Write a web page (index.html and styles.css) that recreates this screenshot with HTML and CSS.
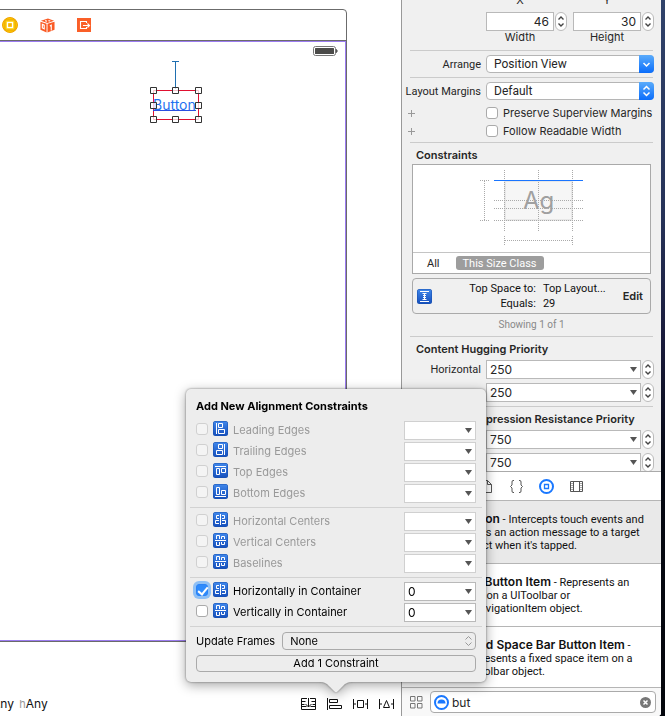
FILE: index.html
```html
<!DOCTYPE html>
<html lang="en">
<head>
<meta charset="utf-8">
<title>Interface Builder</title>
<link rel="stylesheet" href="styles.css">
</head>
<body>
<svg class="defs" aria-hidden="true">
  <defs>
    <linearGradient id="blue" x1="0" y1="0" x2="0" y2="1"><stop offset="0" stop-color="#3f86ea"/><stop offset="1" stop-color="#1650bd"/></linearGradient>
    <symbol id="tile" viewBox="0 0 15 15"><rect width="15" height="15" rx="2.5" fill="#164fae"/><rect x=".5" y=".5" width="14" height="14" rx="2" fill="url(#blue)"/></symbol>
    <symbol id="leading" viewBox="0 0 15 15"><use href="#tile"/><path class="w" d="M3.500 2v11M5.500 2.500h4v4h-4zM5.500 8.500h6v4h-6z"/></symbol>
    <symbol id="trailing" viewBox="0 0 15 15"><use href="#tile"/><path class="w" d="M11.500 2v11M5.500 2.500h4v4h-4zM3.500 8.500h6v4h-6z"/></symbol>
    <symbol id="top" viewBox="0 0 15 15"><use href="#tile"/><path class="w" d="M2 3.500h11M3.500 5.500h3v6h-3zM8.500 5.500h4v4h-4z"/></symbol>
    <symbol id="bottom" viewBox="0 0 15 15"><use href="#tile"/><path class="w" d="M2 12.500h11M3.500 3.500h3v7h-3zM8.500 6.500h4v4h-4z"/></symbol>
    <symbol id="hcenter" viewBox="0 0 15 15"><use href="#tile"/><path class="w" d="M7.500 2v11M6 3.500H3.500v3H6M6 8.500H2.500v3H6M9 3.500h2.500v3H9M9 8.500h3.500v3H9"/></symbol>
    <symbol id="vcenter" viewBox="0 0 15 15"><use href="#tile"/><path class="w" d="M2 7.500h11M3.500 6V2.500h3V6M8.500 6V3.500h3V6M3.500 9v3.500h3V9M8.500 9v2.500h3V9"/></symbol>
    <symbol id="down" viewBox="0 0 7 5"><path d="M0 0h7L3.500 5z" fill="#555"/></symbol>
    <symbol id="step" viewBox="0 0 12 19"><path d="M3.500 7.500L6 5l2.500 2.500M3.500 11.500L6 14l2.500-2.500" fill="none" stroke="#444" stroke-width="1.400"/></symbol>
  </defs>
</svg>

<main class="window">
  <section class="canvas">
    <div class="device">
      <div class="dock">
        <svg width="16" height="16" viewBox="0 0 16 16"><circle cx="8" cy="8" r="7.500" fill="#fdc500" stroke="#f0a400"/><rect x="3" y="3" width="10" height="10" fill="#ffd51c" stroke="#e9a400"/><rect x="5.500" y="5.500" width="5" height="5" fill="#f6b500" stroke="#fff" stroke-width="1.300"/></svg>
        <svg width="15" height="15" viewBox="0 0 16 16"><path fill="#fa5b25" d="M8.500.5L15 3 8 5.200 1 3zM.5 4l6.500 2.200V15.500L.5 12.500zM15.500 4L8 6.200V15.500l7.500-3z"/><path d="M2.500 6.800l2 .8v4l-2-1zM10.500 8.500l1.500-.8v5.500M5.500 2.800l2 .6M9 2.800l2 .4" fill="none" stroke="#fff" stroke-width="1.200"/></svg>
        <svg width="14" height="14" viewBox="0 0 14 14"><rect width="14" height="14" fill="#fa5f28"/><path d="M9.500 5V3.500h-6v7h6V9M6 7.500h6M10.500 5.500l2 2-2 2" fill="none" stroke="#fff" stroke-width="1.100"/></svg>
      </div>
      <div class="screen">
        <svg class="battery" width="25" height="10" viewBox="0 0 25 10"><rect x=".5" y=".5" width="22" height="9" rx="2" fill="#fff" stroke="#777"/><rect x="2" y="2" width="19" height="6" rx=".5" fill="#4b4b49"/><path d="M23.500 3.500q1.500 1.500 0 3z" fill="#555" stroke="#555"/></svg>
        <div class="node">
          <svg class="selection" width="52" height="60" viewBox="0 0 52 60" fill="none">
            <path d="M22 .5h7M25.500 .5V28" stroke="#1f6fb0"/>
            <path d="M3.500 29.500h45v29h-45z" stroke="#e01030"/>
          </svg>
          <span class="node-text">Button</span>
          <svg class="selection" width="52" height="64" viewBox="0 0 52 64" fill="#fff" fill-opacity=".75" stroke="#333">
            <path d="M.5 26.500h6v6h-6zM22.500 26.500h6v6h-6zM45.500 26.500h6v6h-6zM.5 41.500h6v6h-6zM45.500 41.500h6v6h-6zM.5 55.500h6v6h-6zM22.500 55.500h6v6h-6zM45.500 55.500h6v6h-6z"/>
          </svg>
        </div>
      </div>
    </div>
    <footer class="canvas-bar">
      <p class="size-class">Any <small>h</small>Any</p>
      <div class="tools">
        <button aria-label="Stack"><svg width="15" height="12" viewBox="0 0 15 12"><path d="M6 .5H.5v11h14V.5H9M.5 3.500h4M10.500 3.500h4M.5 6.500h3M11.500 6.500h3M.5 8.500h5M9.500 8.500h5M7.500 0v9M4.500 6l3 3 3-3"/></svg></button>
        <button aria-label="Align"><svg width="15" height="12" viewBox="0 0 15 12"><path d="M.5 0v12M2.500 1.500h8v3h-8zM2.500 7.500h12v3h-12z"/></svg></button>
        <button aria-label="Pin"><svg width="15" height="12" viewBox="0 0 15 12"><path d="M.5 1v10M14.500 1v10M.5 6H3M12 6h2.500M4.500 2.500h6v7h-6z"/></svg></button>
        <button aria-label="Resolve"><svg width="15" height="12" viewBox="0 0 15 12"><path d="M.5 1v10M14.500 1v10M.5 6H3M12 6h2.500M7.500 2.500l3 7h-6z"/></svg></button>
      </div>
    </footer>
  </section>

  <aside class="side">
    <section class="inspector">
      <div class="row xy"><div class="pair"><span>X</span><span>Y</span></div></div>
      <div class="row">
        <div class="sizes">
          <input id="w" class="num" value="46"><button class="stepper" aria-label="Width step"><svg><use href="#step"/></svg></button>
          <input id="h" class="num second" value="30"><button class="stepper" aria-label="Height step"><svg><use href="#step"/></svg></button>
        </div>
      </div>
      <div class="row"><div class="pair"><label for="w">Width</label><label for="h">Height</label></div></div>
      <hr class="after-sizes">
      <div class="row"><label for="arrange">Arrange</label>
        <div class="popup"><select id="arrange"><option>Position View</option></select><svg class="cap" viewBox="0 0 14 18"><path d="M4 8l3 3 3-3"/></svg></div></div>
      <hr>
      <div class="row"><label for="margins">Layout Margins</label>
        <div class="popup"><select id="margins"><option>Default</option></select><svg class="cap" viewBox="0 0 14 18"><path d="M4 7.500l3-3 3 3M4 10.500l3 3 3-3"/></svg></div></div>
      <div class="checks">
        <div class="row"><button class="plus" aria-label="Add variation"><svg width="7" height="7"><path d="M3.500 0v7M0 3.500h7"/></svg></button><label class="check"><input type="checkbox">Preserve Superview Margins</label></div>
        <div class="row"><button class="plus" aria-label="Add variation"><svg width="7" height="7"><path d="M3.500 0v7M0 3.500h7"/></svg></button><label class="check"><input type="checkbox">Follow Readable Width</label></div>
      </div>
      <hr class="tight">
      <h2 class="first">Constraints</h2>
      <div class="diagram">
        <svg width="237" height="87" viewBox="0 0 237 87">
          <rect x="92" y="16" width="67" height="39" fill="#f6f6f6" stroke="#e8e8e8" stroke-width="2"/>
          <text x="110" y="44" class="ag">Ag</text>
          <path class="dots" d="M91.500 5v61M125.500 5v61M159.500 5v61M81 35.500h89M81 43.500h89M81 55.500h89M67 15.500h9M67 55.500h9M71.500 16v39M91.500 71v9M159.500 71v9M92 75.500h67"/>
          <path d="M81 15.500h89" stroke="#1a75ff"/>
        </svg>
        <div class="scope"><button>All</button><button class="on">This Size Class</button></div>
      </div>
      <div class="detail">
        <svg width="15" height="15" viewBox="0 0 15 15"><use href="#tile"/><path class="w" d="M3 2.500h9M3 12.500h9M5.500 4.500h4M5.500 10.500h4M7.500 4.500v6M6 6.500h3M6 8.500h3"/></svg>
        <dl><dt>Top Space to:</dt><dd>Top Layout...</dd><dt>Equals:</dt><dd>29</dd></dl>
        <button>Edit</button>
      </div>
      <p class="showing">Showing 1 of 1</p>
      <hr>
      <h2>Content Hugging Priority</h2>
      <div class="row gap"><label for="hh">Horizontal</label><div class="combo-step"><div class="combo"><input id="hh" value="250"><button aria-label="Choices"><svg><use href="#down"/></svg></button></div><button class="stepper" aria-label="Step"><svg><use href="#step"/></svg></button></div></div>
      <div class="row gap"><div class="combo-step"><div class="combo"><input aria-label="Vertical" value="250"><button aria-label="Choices"><svg><use href="#down"/></svg></button></div><button class="stepper" aria-label="Step"><svg><use href="#step"/></svg></button></div></div>
      <hr class="flush">
      <h2>Content Compression Resistance Priority</h2>
      <div class="row gap"><div class="combo-step"><div class="combo"><input aria-label="Horizontal" value="750"><button aria-label="Choices"><svg><use href="#down"/></svg></button></div><button class="stepper" aria-label="Step"><svg><use href="#step"/></svg></button></div></div>
      <div class="row gap"><div class="combo-step"><div class="combo"><input aria-label="Vertical" value="750"><button aria-label="Choices"><svg><use href="#down"/></svg></button></div><button class="stepper" aria-label="Step"><svg><use href="#step"/></svg></button></div></div>
    </section>

    <section class="library">
      <nav class="tabs">
        <button aria-label="Files"><svg width="15" height="15" viewBox="0 0 15 15"><path d="M2.500 1.500h6l4 4v8h-10zM8.500 1.500v4h4"/></svg></button>
        <button aria-label="Snippets"><svg width="15" height="15" viewBox="0 0 15 15"><path d="M5 1.500H4Q3 1.500 3 3v3L1.500 7.500 3 9v3q0 1.500 1 1.500h1M10 1.500h1q1 0 1 1.500v3l1.500 1.500L12 9v3q0 1.500-1 1.500h-1"/></svg></button>
        <button aria-label="Objects"><svg width="15" height="15" viewBox="0 0 15 15"><g stroke="#1a78ff"><circle cx="7.500" cy="7.500" r="6.500" stroke-width="2"/><path d="M5.500 5.500h4v4h-4z" stroke-width="1.300"/></g></svg></button>
        <button aria-label="Media"><svg width="15" height="15" viewBox="0 0 15 15"><path d="M1.500 2.500h12v10h-12zM4.500 2.500v10M10.500 2.500v10"/><path d="M3 4v8M12 4v8" stroke-dasharray="1 1"/></svg></button>
      </nav>
      <ul class="items">
        <li class="selected"><p><b>Button</b> - Intercepts touch events and<br>sends an action message to a target<br>object when it's tapped.</p></li>
        <li><p><b>Bar Button Item</b> - Represents an<br>item on a UIToolbar or<br>UINavigationItem object.</p></li>
        <li><p><b>Fixed Space Bar Button Item</b> -<br>Represents a fixed space item on a<br>UIToolbar object.</p></li>
      </ul>
      <div class="filter">
        <button aria-label="Icon view"><svg width="13" height="13" viewBox="0 0 13 13"><path d="M.5 .5h4.500v4.500h-4.500zM7.500 .5h4.500v4.500h-4.500zM.5 7.500h4.500v4.500h-4.500zM7.500 7.500h4.500v4.500h-4.500z" fill="none" stroke="#777"/></svg></button>
        <div class="search">
          <svg width="15" height="15" viewBox="0 0 15 15"><circle cx="7.500" cy="7.500" r="6.500" fill="#fff" stroke="#1a78ff" stroke-width="2"/><path d="M3.500 8.500a4 4 0 0 1 8 0z" fill="#1a78ff"/></svg>
          <input aria-label="Filter" value="but">
          <button aria-label="Clear"><svg width="11" height="11" viewBox="0 0 11 11"><circle cx="5.500" cy="5.500" r="5.500" fill="#777"/><path d="M3.500 3.500l4 4M7.500 3.500l-4 4" stroke="#fff" stroke-width="1.500"/></svg></button>
        </div>
      </div>
    </section>
  </aside>

  <form class="popover">
    <h2>Add New Alignment Constraints</h2>
    <fieldset>
      <div class="line off"><input type="checkbox" id="a1" disabled><svg><use href="#leading"/></svg><label for="a1">Leading Edges</label><div class="combo"><input aria-label="Leading value" disabled><button type="button" aria-label="Choices"><svg><use href="#down"/></svg></button></div></div>
      <div class="line off"><input type="checkbox" id="a2" disabled><svg><use href="#trailing"/></svg><label for="a2">Trailing Edges</label><div class="combo"><input aria-label="Trailing value" disabled><button type="button" aria-label="Choices"><svg><use href="#down"/></svg></button></div></div>
      <div class="line off"><input type="checkbox" id="a3" disabled><svg><use href="#top"/></svg><label for="a3">Top Edges</label><div class="combo"><input aria-label="Top value" disabled><button type="button" aria-label="Choices"><svg><use href="#down"/></svg></button></div></div>
      <div class="line off"><input type="checkbox" id="a4" disabled><svg><use href="#bottom"/></svg><label for="a4">Bottom Edges</label><div class="combo"><input aria-label="Bottom value" disabled><button type="button" aria-label="Choices"><svg><use href="#down"/></svg></button></div></div>
    </fieldset>
    <fieldset>
      <div class="line off"><input type="checkbox" id="a5" disabled><svg><use href="#hcenter"/></svg><label for="a5">Horizontal Centers</label><div class="combo"><input aria-label="Horizontal centers value" disabled><button type="button" aria-label="Choices"><svg><use href="#down"/></svg></button></div></div>
      <div class="line off"><input type="checkbox" id="a6" disabled><svg><use href="#vcenter"/></svg><label for="a6">Vertical Centers</label><div class="combo"><input aria-label="Vertical centers value" disabled><button type="button" aria-label="Choices"><svg><use href="#down"/></svg></button></div></div>
      <div class="line off"><input type="checkbox" id="a7" disabled><svg><use href="#vcenter"/></svg><label for="a7">Baselines</label><div class="combo"><input aria-label="Baselines value" disabled><button type="button" aria-label="Choices"><svg><use href="#down"/></svg></button></div></div>
    </fieldset>
    <fieldset>
      <div class="line"><input type="checkbox" id="a8" checked><svg><use href="#hcenter"/></svg><label for="a8">Horizontally in Container</label><div class="combo"><input aria-label="Horizontal offset" value="0"><button type="button" aria-label="Choices"><svg><use href="#down"/></svg></button></div></div>
      <div class="line"><input type="checkbox" id="a9"><svg><use href="#vcenter"/></svg><label for="a9">Vertically in Container</label><div class="combo"><input aria-label="Vertical offset" value="0"><button type="button" aria-label="Choices"><svg><use href="#down"/></svg></button></div></div>
    </fieldset>
    <div class="update"><label for="uf">Update Frames</label><div class="popup plain"><select id="uf"><option>None</option></select><svg class="cap" viewBox="0 0 14 18"><path d="M4 7.500l3-3 3 3M4 10.500l3 3 3-3"/></svg></div></div>
    <button type="button" class="add">Add 1 Constraint</button>
    <svg class="arrow" width="36" height="12" viewBox="0 0 36 12"><path d="M0 0v1C8 1 9 3 12 6l4.500 4.500Q18 12 19.500 10.500L24 6C27 3 28 1 36 1V0z" fill="#ededed"/></svg>
  </form>
</main>
</body>
</html>
```

FILE: styles.css
```css
* { box-sizing: border-box; }
body {
  margin: 0;
  font: 11px/13px Inter, "Liberation Sans", sans-serif;
  color: #262626;
  background: linear-gradient(#30426a, #263258 30%, #191a3a 48%, #050812 65%, #04060c);
}
h2, p, dl, dd, ul, fieldset { margin: 0; padding: 0; border: 0; }
ul { list-style: none; }
svg { display: block; flex: none; }
input, select, button { font: inherit; color: inherit; margin: 0; padding: 0; border: 0; background: none; border-radius: 0; outline: 0; }
input { min-width: 0; }
select { appearance: none; }
button { display: flex; align-items: center; justify-content: center; }
.defs { position: absolute; width: 0; height: 0; }
.w { fill: none; stroke: #fff; }

.window {
  position: relative;
  display: flex;
  height: 100vh;
  margin-right: 4px;
  background: #fff;
  overflow: hidden;
  border-bottom-right-radius: 4px;
}

/* Canvas */
.canvas { flex: 1; min-width: 0; display: flex; flex-direction: column; overflow: hidden; }
.device {
  flex: 1;
  display: flex;
  flex-direction: column;
  margin: 9px 54px 0 -10px;
  border: 1px solid #6b6b6b;
  border-top-right-radius: 4px;
}
.dock { display: flex; align-items: center; gap: 22px; height: 30px; padding-left: 11px; }
.screen { position: relative; flex: 1; border: 1px solid #9b7cf0; box-shadow: 0 -1px #6b6b6b; margin-top: 1px; }
.battery { margin: 4px 7px 0 auto; }
.node { position: absolute; left: 158px; top: 19px; width: 52px; height: 64px; }
.node .selection { position: absolute; left: 0; top: 0; }
.node-text { position: absolute; left: 3px; top: 35px; font-size: 14px; line-height: 18px; color: #1f72f0; border-bottom: 1px solid #2b4fe0; height: 15px; }
.canvas-bar { display: flex; justify-content: space-between; align-items: center; height: 74px; padding: 49px 7px 0 0; }
.size-class { margin-left: -8px; font-size: 12px; line-height: 14px; color: #111; white-space: nowrap; }
.size-class small { margin-left: 2px; font-size: 11px; color: #999; }
.tools { display: flex; gap: 11px; }
.tools path { fill: none; stroke: #111; }

/* Inspector */
.side { display: flex; flex-direction: column; width: 260px; border-left: 1px solid #999; background: #f0f0f0; }
.inspector { flex: 1; min-height: 0; overflow: hidden; }
.row { display: grid; grid-template-columns: 79px minmax(0, 1fr); column-gap: 5px; align-items: center; padding-right: 7px; }
.row > label:first-child { text-align: right; white-space: nowrap; }
.row > label:first-child, .popup select, .scope, .detail dl, .showing, .items { font-family: Roboto, Inter, sans-serif; }
.row > :only-child { grid-column: 2; }
.xy { margin-top: -6px; padding-bottom: 5px; }
.pair { display: grid; grid-template-columns: 68px 68px; column-gap: 19px; text-align: center; }
.sizes { display: flex; gap: 1px; }
.num { flex: 1; width: 0; height: 19px; padding: 0 4px; border: 1px solid #b9b9b9; background: #fff; text-align: right; font-size: 12px; }
.second { margin-left: 5px; }
.stepper { width: 12px; height: 19px; border: 1px solid #bbb; border-radius: 6px; background: #fff; flex: none; }
.stepper svg { width: 12px; height: 19px; }
hr { height: 1px; margin: 4px 8px; border: 0; background: #cbcbcb; }
.after-sizes { margin-top: 6px; }
.tight { margin-top: 2px; }
.flush { margin-top: 0; }
.popup { position: relative; height: 18px; }
.popup select { width: 100%; height: 18px; padding: 0 7px; border: 1px solid #b5b5b5; border-radius: 4px; background: #fff; font-size: 12px; line-height: 16px; }
.cap { position: absolute; right: 0; top: 0; width: 15px; height: 18px; border-radius: 0 4px 4px 0; background: linear-gradient(#5aabfb, #0a6dfb); pointer-events: none; }
.cap path { fill: none; stroke: #fff; stroke-width: 1.500; }
.checks { margin-top: 4px; }
.checks .row { height: 18px; }
.plus { margin-left: 6px; justify-self: start; }
.plus path { stroke: #999; }
.check { display: flex; align-items: center; gap: 5px; white-space: nowrap; }
input[type="checkbox"] { appearance: none; position: relative; flex: none; width: 12px; height: 12px; border: 1px solid #aaa; border-radius: 3px; background: #fff; }
input[type="checkbox"]:checked { border-color: #2a83f7; background: #2f8bfb; box-shadow: 0 0 0 3px #8fc0f5; }
input[type="checkbox"]:checked::after { content: ""; position: absolute; left: 3px; top: 0; width: 4px; height: 8px; border: solid #fff; border-width: 0 2px 2px 0; transform: rotate(40deg); }
h2 { font-size: 11px; line-height: 14px; font-weight: 600; white-space: nowrap; }
.inspector h2 { margin: 5px 14px 4px; }
.inspector h2.first { margin-bottom: 2px; }
.diagram { margin: 0 10px; border: 1px solid #a9a9a9; background: #fff; }
.diagram svg { margin: 0 auto; }
.ag { font-size: 24px; fill: #a0a0a0; }
.dots { fill: none; stroke: #aaa; stroke-dasharray: 1 1; }
.scope { display: flex; align-items: center; gap: 16px; height: 21px; padding-left: 14px; border-top: 1px solid #c4c4c4; }
.scope .on { padding: 0 7px; height: 14px; border-radius: 3px; background: #9d9d9d; color: #fff; }
.detail { display: flex; align-items: center; height: 36px; margin: 4px 10px; padding: 0 7px 0 4px; border: 1px solid #aaa; border-radius: 4px; }
.detail dl { flex: 1; display: grid; grid-template-columns: auto auto; justify-content: end; gap: 2px 7px; margin-right: 17px; color: #111; }
.detail dt { text-align: right; }
.detail button { font-weight: 600; }
.showing { line-height: 14px; text-align: center; font-size: 10px; color: #888; }
.gap { margin-bottom: 4px; }
.combo-step { display: flex; gap: 1px; }
.combo { flex: 1; display: flex; height: 19px; min-width: 0; padding: 0 3px; border: 1px solid #b9b9b9; background: #fff; }
.combo input { flex: 1; width: 0; font-size: 12px; }
.combo svg { width: 7px; height: 5px; }

/* Library */
.library { background: #fff; border-top: 1px solid #aaa; }
.tabs { display: flex; justify-content: center; gap: 15px; height: 29px; border-bottom: 1px solid #b5b5b5; }
.tabs path { fill: none; stroke: #555; }
.tabs svg { fill: none; }
.tabs g path { stroke: inherit; }
.items li { height: 63px; padding: 12px 0 0 60px; border-bottom: 1px solid #b5b5b5; color: #111; white-space: nowrap; overflow: hidden; }
.items b { font-family: Inter, sans-serif; font-size: 12px; line-height: 12px; font-weight: 600; }
.items .selected { background: #e9e9e9; }
.items li:last-child { height: 61px; }
.filter { display: flex; align-items: center; gap: 7px; height: 28px; padding: 0 5px 0 8px; background: #f8f8f8; }
.search { flex: 1; display: flex; align-items: center; gap: 3px; height: 22px; min-width: 0; padding: 0 4px 0 3px; border: 1px solid #aaa; border-radius: 4px; background: #fff; }
.search input { flex: 1; font-size: 12px; }

/* Alignment popover */
.popover {
  position: absolute;
  right: 175px;
  bottom: 34px;
  width: 300px;
  padding: 10px;
  border-radius: 5px;
  background: #ededed;
  color: #000;
  filter: drop-shadow(0 0 1px rgba(0, 0, 0, .45)) drop-shadow(0 3px 6px rgba(0, 0, 0, .35));
}
.popover fieldset { display: grid; gap: 2px; padding: 4px 0; border-bottom: 1px solid #d2d2d2; margin: 0 -6px; padding-inline: 6px; }
.popover h2 { margin-bottom: 4px; font-weight: 700; }
.line { display: grid; grid-template-columns: 12px 15px 1fr 72px; align-items: center; column-gap: 5px; height: 19px; }
.line > svg { width: 15px; height: 15px; margin-bottom: 4px; }
.line > input { margin-bottom: 3px; }
.off label { color: #999; }
.off .combo, .off > input { border-color: #d0d0d0; }
.off > input { background: #f4f4f4; }
.update { display: flex; align-items: center; gap: 7px; margin: 5px 0; }
.plain { flex: 1; }
.plain select { background: none; border-color: #aaa; font: inherit; }
.plain .cap { background: none; }
.plain .cap path { stroke: #999; stroke-width: 1; }
.add { width: 100%; height: 17px; border: 1px solid #aaa; border-radius: 4px; }
.arrow { position: absolute; left: 132px; top: 100%; margin-top: -1px; }
```
